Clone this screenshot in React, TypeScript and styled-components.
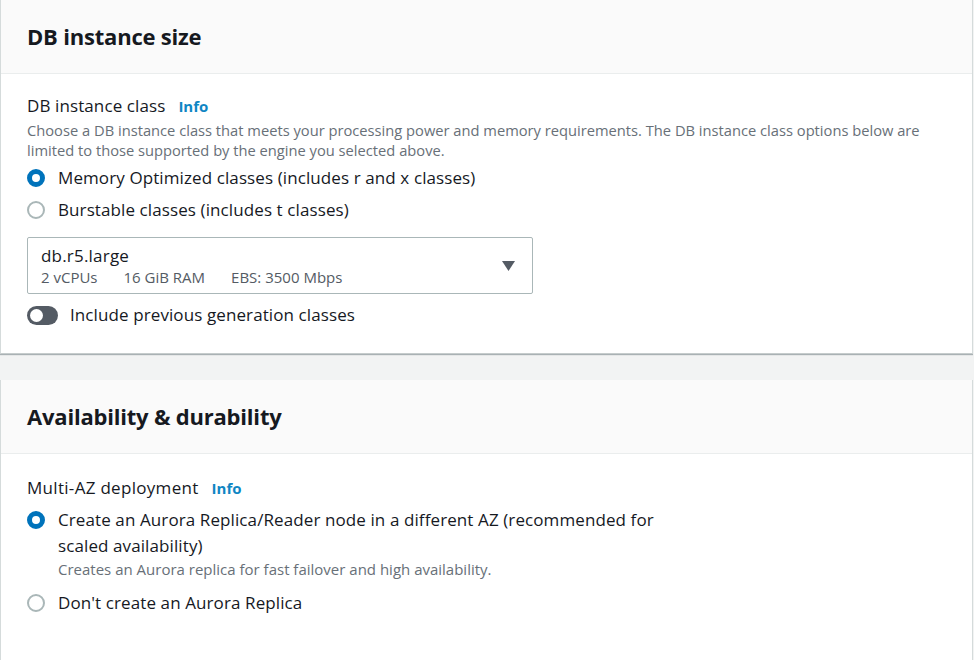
import styled, { createGlobalStyle } from "styled-components";

const GlobalStyle = createGlobalStyle`
  body {
    margin: 0;
    background-color: #f2f3f3;
    font-family: "Open Sans", "Noto Sans", sans-serif;
    color: #16191f;
  }
`;

const Page = styled.div`
  display: flex;
  flex-direction: column;
  gap: 26px;
  width: 973px;
  height: 660px;
  overflow: hidden;
`;

const Card = styled.section`
  background-color: #fff;
  border-left: 1px solid #d5dbdb;
  border-right: 1px solid #d5dbdb;
  border-bottom: 1px solid #c6cccc;
  box-shadow: 0 1px 1px 0 rgba(0, 28, 36, 0.3);
`;

const CardHeader = styled.div`
  display: flex;
  align-items: center;
  height: 74px;
  padding: 0 26px;
  background-color: #fafafa;
  border-bottom: 1px solid #eaeded;
  box-sizing: border-box;
`;

const Title = styled.h2`
  margin: 0 0 1px;
  font-size: 22px;
  font-weight: 700;
  letter-spacing: -0.2px;
`;

const CardBody = styled.div<{ $top: number; $bottom: number }>`
  display: flex;
  flex-direction: column;
  align-items: flex-start;
  padding: ${(p) => p.$top}px 26px ${(p) => p.$bottom}px;
`;

const Label = styled.div<{ $wide?: boolean }>`
  display: flex;
  align-items: baseline;
  gap: 13px;
  height: 22px;
  font-size: 17px;
  line-height: 22px;
  letter-spacing: ${(p) => (p.$wide ? "0.3px" : "0.1px")};
`;

const InfoLink = styled.a`
  color: #0f86c4;
  font-size: 15px;
  font-weight: 700;
  letter-spacing: 0;
  text-decoration: none;
`;

const Description = styled.p`
  margin: 3px 0 0;
  font-size: 14.7px;
  line-height: 20px;
  color: #687078;
`;

const RadioList = styled.div<{ $top: number; $gap: number }>`
  display: flex;
  flex-direction: column;
  gap: ${(p) => p.$gap}px;
  margin-top: ${(p) => p.$top}px;
`;

const RadioRow = styled.label`
  display: flex;
  align-items: flex-start;
  gap: 13px;
`;

const RadioDot = styled.span<{ $checked?: boolean }>`
  flex: none;
  width: 18px;
  height: 18px;
  margin-top: 4px;
  border-radius: 50%;
  box-sizing: border-box;
  background-color: #fff;
  border: ${(p) => (p.$checked ? "5px solid #0073bb" : "2px solid #aab7b8")};
`;

const RadioText = styled.div`
  display: flex;
  flex-direction: column;
  max-width: 620px;
  font-size: 17px;
  line-height: 26px;
  letter-spacing: 0.1px;
`;

const RadioHint = styled.span`
  font-size: 15px;
  line-height: 20px;
  letter-spacing: 0;
  color: #687078;
`;

const Select = styled.div`
  display: flex;
  align-items: center;
  justify-content: space-between;
  width: 506px;
  height: 57px;
  margin-top: 14px;
  padding: 0 17px 0 13px;
  box-sizing: border-box;
  border: 1px solid #aab7b8;
  border-radius: 2px;
`;

const SelectValue = styled.div`
  display: flex;
  flex-direction: column;
`;

const SelectMain = styled.span`
  font-size: 17px;
  line-height: 22px;
  letter-spacing: 0.2px;
`;

const SelectMeta = styled.div`
  display: flex;
  gap: 26px;
  font-size: 15px;
  line-height: 20px;
  color: #545b64;
`;

const ToggleRow = styled.label`
  display: flex;
  align-items: center;
  gap: 12px;
  margin-top: 10px;
  font-size: 17px;
  line-height: 22px;
  letter-spacing: 0.1px;
`;

const Toggle = styled.span`
  position: relative;
  width: 31px;
  height: 19px;
  border-radius: 10px;
  background-color: #545b64;

  &::after {
    content: "";
    position: absolute;
    left: 3px;
    top: 3px;
    width: 13px;
    height: 13px;
    border-radius: 50%;
    background-color: #fff;
  }
`;

function Radio({ checked, children }: { checked?: boolean; children: React.ReactNode }) {
  return (
    <RadioRow>
      <RadioDot $checked={checked} />
      <RadioText>{children}</RadioText>
    </RadioRow>
  );
}

export default function App() {
  return (
    <>
      <GlobalStyle />
      <Page>
        <Card>
          <CardHeader>
            <Title>DB instance size</Title>
          </CardHeader>
          <CardBody $top={21} $bottom={27}>
            <Label>
              DB instance class <InfoLink href="#">Info</InfoLink>
            </Label>
            <Description>
              Choose a DB instance class that meets your processing power and memory requirements. The DB instance class
              options below are limited to those supported by the engine you selected above.
            </Description>
            <RadioList $top={5} $gap={6}>
              <Radio checked>Memory Optimized classes (includes r and x classes)</Radio>
              <Radio>Burstable classes (includes t classes)</Radio>
            </RadioList>
            <Select>
              <SelectValue>
                <SelectMain>db.r5.large</SelectMain>
                <SelectMeta>
                  <span>2 vCPUs</span>
                  <span>16 GiB RAM</span>
                  <span>EBS: 3500 Mbps</span>
                </SelectMeta>
              </SelectValue>
              <svg width="13" height="10" viewBox="0 0 13 10">
                <path d="M0 0 H13 L6.5 10 Z" fill="#545b64" />
              </svg>
            </Select>
            <ToggleRow>
              <Toggle />
              Include previous generation classes
            </ToggleRow>
          </CardBody>
        </Card>
        <Card>
          <CardHeader>
            <Title>Availability &amp; durability</Title>
          </CardHeader>
          <CardBody $top={23} $bottom={60}>
            <Label $wide>
              Multi-AZ deployment <InfoLink href="#">Info</InfoLink>
            </Label>
            <RadioList $top={8} $gap={11}>
              <Radio checked>
                <span>Create an Aurora Replica/Reader node in a different AZ (recommended for scaled availability)</span>
                <RadioHint>Creates an Aurora replica for fast failover and high availability.</RadioHint>
              </Radio>
              <Radio>Don't create an Aurora Replica</Radio>
            </RadioList>
          </CardBody>
        </Card>
      </Page>
    </>
  );
}
